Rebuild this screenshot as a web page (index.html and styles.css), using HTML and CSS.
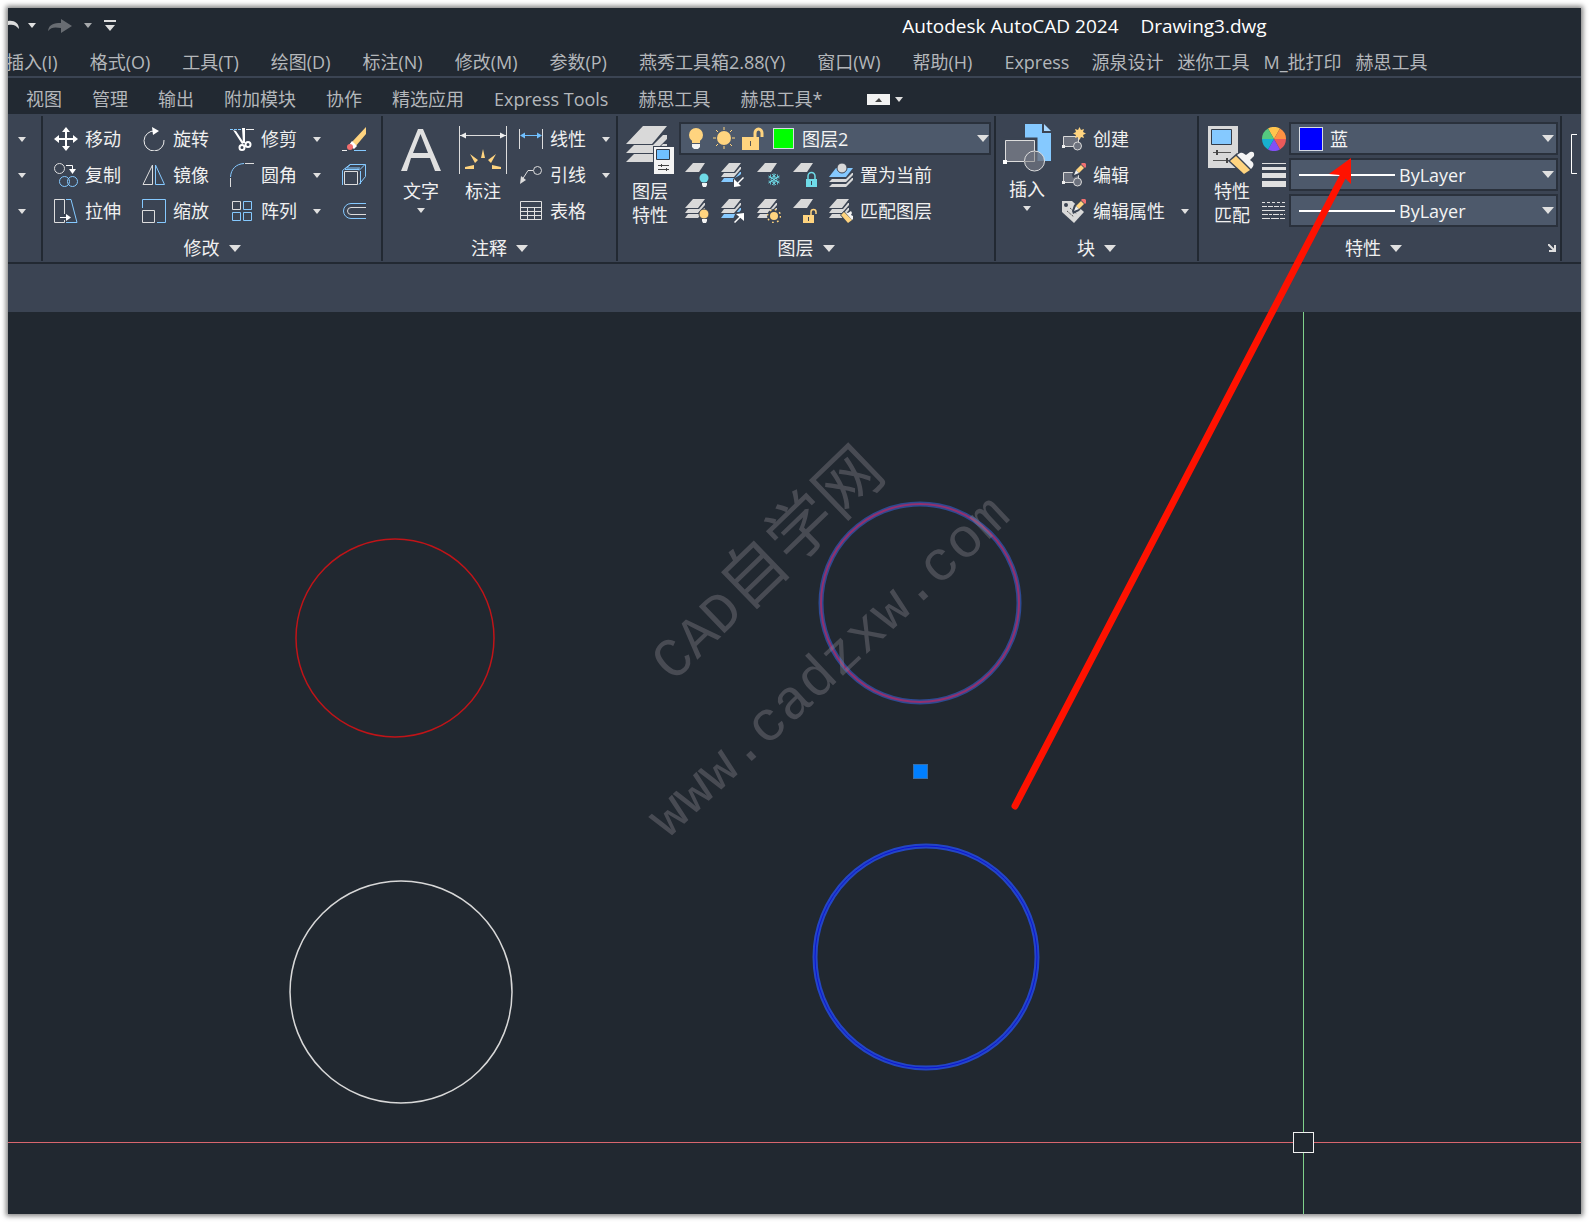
FILE: index.html
```
<!DOCTYPE html>
<html lang="zh-CN">
<head>
  <meta charset="utf-8">
  <title>Autodesk AutoCAD 2024 - Drawing3.dwg</title>
  <link rel="stylesheet" href="styles.css">
</head>
<body>
  <!-- shared icon shapes -->
  <svg class="defs" width="0" height="0">
    <symbol id="down" viewBox="0 0 8 5"><path d="M0 0h8L4 5z" fill="#e0e0e0"/></symbol>
    <symbol id="sheet" viewBox="0 0 24 24"><path d="M0 9L8 0h12l-6 9z" fill="#d9d9d9"/></symbol>
    <symbol id="stack" viewBox="0 0 24 24">
      <path d="M0 9L8 0h12l-7 9zM0 14l3-4h11l5-6h1v2l-7 8zM0 19l3-4h11l5-6h1v2l-7 8z" fill="#d9d9d9"/>
    </symbol>
    <symbol id="stack-blue" viewBox="0 0 24 24">
      <path d="M0 9L8 0h12l-7 9zM0 14l3-4h11l5-6h1v2l-7 8z" fill="#d9d9d9"/>
      <path d="M0 19l3-4h11l5-6h1v2l-7 8z" fill="#85c9ff"/>
    </symbol>
    <symbol id="block" viewBox="0 0 24 24">
      <path d="M1.500 9.500h15v10h-15z" fill="#6c717d" stroke="#d9d9d9"/>
      <circle cx="15.500" cy="19" r="4" fill="#6c717d" stroke="#d9d9d9"/>
      <path d="M0 18h3v3H0z" fill="#eee"/>
    </symbol>
    <symbol id="pencil" viewBox="0 0 24 24">
      <path d="M10 12l2-6 7-6 5 4-7 8-6 3z" fill="#3b4453"/>
      <path d="M14 7l5-5 3 3-5 5z" fill="#ffd47f"/>
      <path d="M20 0h3l1 1v3l-1 1-4-4z" fill="#f07070"/>
      <path d="M14 7l3 3-5 2z" fill="#eee"/>
    </symbol>
  </svg>

  <div class="window">
    <header class="titlebar">
      <div class="quick">
        <button class="tool undo" aria-label="撤销"><svg width="11" height="14"><path d="M0 2c6-1 11 2 11 8-3-4-6-5-11-4z" fill="#ddd"/></svg></button>
        <button class="tool" aria-label="撤销列表"><svg width="8" height="5"><use href="#down"/></svg></button>
        <button class="tool redo" aria-label="重做"><svg width="24" height="14"><path d="M0 12C1 5 6 4 13 4V0l11 7-11 7v-5C7 8 3 8 0 12z" fill="#686c72"/></svg></button>
        <button class="tool dim" aria-label="重做列表"><svg width="8" height="5"><use href="#down"/></svg></button>
        <button class="tool" aria-label="自定义"><svg width="12" height="12"><path d="M0 0h12v2H0zM1 5h10l-5 6z" fill="#ddd"/></svg></button>
      </div>
      <div class="title"><span>Autodesk AutoCAD 2024</span><span>Drawing3.dwg</span></div>
    </header>

    <nav class="menu">
      <div class="menu-main">
        <a href="#">插入(I)</a><a href="#">格式(O)</a><a href="#">工具(T)</a><a href="#">绘图(D)</a><a href="#">标注(N)</a><a href="#">修改(M)</a><a href="#">参数(P)</a><a href="#">燕秀工具箱2.88(Y)</a><a href="#">窗口(W)</a><a href="#">帮助(H)</a><a href="#">Express</a>
      </div>
      <div class="menu-extra">
        <a href="#">源泉设计</a><a href="#">迷你工具</a><a href="#">M_批打印</a><a href="#">赫思工具</a>
      </div>
    </nav>

    <nav class="tabs">
      <a href="#">视图</a><a href="#">管理</a><a href="#">输出</a><a href="#">附加模块</a><a href="#">协作</a><a href="#">精选应用</a><a href="#">Express Tools</a><a href="#">赫思工具</a><a href="#">赫思工具*</a>
      <button class="tool collapse" aria-label="最小化功能区">
        <svg width="23" height="11"><path d="M0 0h23v11H0z" fill="#f2f2f2"/><path d="M8 8h7l-3-4z" fill="#444"/></svg>
        <svg width="8" height="5"><use href="#down"/></svg>
      </button>
    </nav>

    <main class="ribbon">
      <section class="panel panel-cut">
        <button class="tool row" aria-label="圆弧"><svg width="8" height="5"><use href="#down"/></svg></button>
        <button class="tool row" aria-label="矩形"><svg width="8" height="5"><use href="#down"/></svg></button>
        <button class="tool row" aria-label="填充"><svg width="8" height="5"><use href="#down"/></svg></button>
      </section>

      <section class="panel modify">
        <div class="modify-grid">
          <button class="tool">
            <svg class="ic" viewBox="0 0 24 24"><path d="M12 0l4 5h-3v6h6V8l5 4-5 4v-3h-6v6h3l-4 5-4-5h3v-6H5v3l-5-4 5-4v3h6V5H8z" fill="#fff"/></svg>移动</button>
          <button class="tool">
            <svg class="ic" viewBox="0 0 24 24" fill="none"><path d="M13 4A10 10 0 1 0 22 13" stroke="#eee"/><path d="M10 0l7 4-6 4z" fill="#fff"/></svg>旋转</button>
          <button class="tool">
            <svg class="ic" viewBox="0 0 24 24" fill="none"><path d="M0 2.500h12" stroke="#85c9ff" stroke-dasharray="3 1"/><path d="M16 2.500h8" stroke="#eee"/><path d="M3 3l3 1 8 12-2 1zM12 1h3v15h-2z" fill="#fff"/><circle cx="12" cy="20.500" r="2.500" stroke="#fff" stroke-width="2"/><circle cx="18" cy="17.500" r="2.500" stroke="#fff" stroke-width="2"/></svg>修剪
            <svg class="drop" width="8" height="5"><use href="#down"/></svg></button>
          <button class="tool" aria-label="删除">
            <svg class="ic" viewBox="0 0 24 24"><path d="M12 23.500h12" stroke="#85c9ff"/><path d="M0 23.500h5" stroke="#eee"/><path d="M9 16L24 0v7l-11 13z" fill="#ffd47f"/><path d="M7 18l3-4 5 5-3 3z" fill="#fff"/><circle cx="8" cy="20" r="3" fill="#f26d6d"/></svg></button>

          <button class="tool">
            <svg class="ic" viewBox="0 0 24 24" fill="none"><circle cx="5.500" cy="5.500" r="5" stroke="#ddd"/><circle cx="10.500" cy="18.500" r="5" stroke="#85c9ff"/><circle cx="18.500" cy="18.500" r="5" stroke="#85c9ff"/><path d="M12 2.500h6.500V7" stroke="#fff"/><path d="M15 6h7l-3.500 5z" fill="#fff"/></svg>复制</button>
          <button class="tool">
            <svg class="ic" viewBox="0 0 24 24" fill="none"><path d="M10.500 2v19.500H1z" stroke="#ddd"/><path d="M13.500 2v19.500h9z" stroke="#85c9ff"/></svg>镜像</button>
          <button class="tool">
            <svg class="ic" viewBox="0 0 24 24" fill="none"><path d="M.5 14C1 6 6 1 14 .5" stroke="#85c9ff"/><path d="M15 .5h9M.5 15v9" stroke="#ddd"/></svg>圆角
            <svg class="drop" width="8" height="5"><use href="#down"/></svg></button>
          <button class="tool" aria-label="分解">
            <svg class="ic" viewBox="0 0 24 24" fill="none"><path d="M.5 22V7.500L8 1.500h15.500v12L17 21.500M17 7.500l6-6M3 6.500h14l-1-1M18.500 8v13M8 2L3 6M5 5h13" stroke="#85c9ff"/><path d="M2.500 8.500h13v13h-13z" stroke="#ddd"/></svg></button>

          <button class="tool">
            <svg class="ic" viewBox="0 0 24 24" fill="none"><path d="M10.500 15V.5H.5v23h10V21" stroke="#ddd"/><path d="M12 .5h5l6 23H12" stroke="#85c9ff"/><path d="M6 18.500h7" stroke="#fff"/><path d="M12 15l5 3.500-5 3.500z" fill="#fff"/></svg>拉伸</button>
          <button class="tool">
            <svg class="ic" viewBox="0 0 24 24" fill="none"><path d="M.5 9V.5h23v23H15" stroke="#85c9ff"/><path d="M.5 11.500h12v12H.5z" stroke="#ddd"/></svg>缩放</button>
          <button class="tool">
            <svg class="ic" viewBox="0 0 24 24" fill="none"><path d="M2.500 2.500h8v8h-8z" stroke="#ddd"/><path d="M13.500 2.500h8v8h-8zM2.500 13.500h8v8h-8zM13.500 13.500h8v8h-8z" stroke="#85c9ff"/></svg>阵列
            <svg class="drop" width="8" height="5"><use href="#down"/></svg></button>
          <button class="tool" aria-label="偏移">
            <svg class="ic" viewBox="0 0 24 24" fill="none"><path d="M24 4.500H9a7.500 7.500 0 0 0 0 15h15" stroke="#85c9ff"/><path d="M24 8.500H9a3.500 3.500 0 0 0 0 7h15" stroke="#ddd"/></svg></button>
        </div>
        <button class="tool panel-title">修改<svg width="12" height="7" viewBox="0 0 8 5" preserveAspectRatio="none"><use href="#down"/></svg></button>
      </section>

      <section class="panel annotate">
        <div class="panel-body">
          <button class="tool big">
            <svg width="40" height="48"><path d="M0 45L17 3h5l18 42h-6l-5-13H10L6 45zM12 27h15L19.500 8z" fill="#e0e0e0"/></svg>
            <span>文字</span>
            <svg width="8" height="5"><use href="#down"/></svg>
          </button>
          <button class="tool big">
            <svg width="48" height="48"><path d="M.5 0v48M47.500 0v48M1 9.500h46" stroke="#ddd"/><path d="M1 9.500l6-3v6zM47 9.500l-6-3v6z" fill="#eee"/><path d="M24 23l2 9h-4zM11 28l8 6-3 3zM37 28l-8 6 3 3zM6 41l9-2v4H6zM42 41l-9-2v4h9z" fill="#ffd47f"/></svg>
            <span>标注</span>
          </button>
          <div class="column">
            <button class="tool row">
              <svg class="ic" viewBox="0 0 24 24"><path d="M.5 2v20M23.500 2v20" stroke="#ddd"/><path d="M2 8.500h20" stroke="#70c0ff"/><path d="M1 8.500l5-3v6zM23 8.500l-5-3v6z" fill="#70c0ff"/></svg>线性
              <svg class="drop" width="8" height="5"><use href="#down"/></svg></button>
            <button class="tool row">
              <svg class="ic" viewBox="0 0 24 24"><path d="M3 17L9 7.500h5" fill="none" stroke="#ddd"/><circle cx="18.500" cy="7.500" r="4" fill="none" stroke="#ddd"/><path d="M1 21l1-8 5 4z" fill="#ddd"/></svg>引线
              <svg class="drop" width="8" height="5"><use href="#down"/></svg></button>
            <button class="tool row">
              <svg class="ic" viewBox="0 0 24 24"><path d="M1.500 2.500h21v18h-21zM1.500 8.500h21M1.500 12.500h21M1.500 16.500h21M8.500 8v12M15.500 8v12" fill="none" stroke="#e0e0e0"/></svg>表格</button>
          </div>
        </div>
        <button class="tool panel-title">注释<svg width="12" height="7" viewBox="0 0 8 5" preserveAspectRatio="none"><use href="#down"/></svg></button>
      </section>

      <section class="panel layers">
        <div class="panel-body">
          <button class="tool big">
            <svg width="48" height="48"><path d="M0 18L17 0h24L26 18zM0 27l8-8h19L37 9h4v4L27 27zM0 36l8-8h19l10-10h4v4L27 36z" fill="#d9d9d9"/><path d="M27 20h21v28H27z" fill="#3b4453"/><path d="M28 21h20v27H28z" fill="#f4f4f4"/><path d="M30.500 23.500h13v10h-13z" fill="#70c0ff" stroke="#333b47"/><path d="M32 39.500h11M32 43.500h11M35.500 38v3M40.500 42v3" stroke="#444"/></svg>
            <span>图层<br>特性</span>
          </button>
          <div class="layer-tools">
            <div class="combo">
              <svg width="80" height="24">
                <circle cx="8" cy="8" r="7" fill="#ffd47f"/><path d="M4 12h8v4H4z" fill="#ffd47f"/><path d="M4 17h8v3l-2 2H6l-2-2z" fill="#f4f4f4"/>
                <circle cx="36" cy="11" r="7" fill="#ffd47f"/><path d="M36 0v3M36 19v3M25 11h3M44 11h3M28 3l2 2M42 17l2 2M28 19l2-2M42 5l2-2" stroke="#ffd47f"/>
                <path d="M54 10h17v13H54z" fill="#ffd47f"/><path d="M67 10V5a3.500 4 0 0 1 7 0v4" transform="translate(0 1)" fill="none" stroke="#ffd47f" stroke-width="3"/><path d="M62.500 14v5" stroke="#555"/>
              </svg>
              <span class="swatch green"></span>
              <select aria-label="图层"><option>图层2</option></select>
              <svg class="mark" width="12" height="7" viewBox="0 0 8 5" preserveAspectRatio="none"><use href="#down"/></svg>
            </div>
            <div class="layer-grid">
              <button class="tool" aria-label="关"><svg class="ic" viewBox="0 0 24 24"><use href="#sheet"/><circle cx="19" cy="15" r="4.500" fill="#6fdbe8"/><path d="M17 20h5v2l-1 2h-3l-1-2z" fill="#f4f4f4"/></svg></button>
              <button class="tool" aria-label="隔离"><svg class="ic" viewBox="0 0 24 24"><use href="#stack-blue"/><path d="M12 16l9-5 3 3-8 10h-4z" fill="#3b4453"/><path d="M22.500 14.500l-6 6" stroke="#fff" stroke-width="1.500"/><path d="M13 24v-8l7 7z" fill="#fff"/></svg></button>
              <button class="tool" aria-label="冻结"><svg class="ic" viewBox="0 0 24 24"><use href="#sheet"/><path d="M17 10.500v12M11.500 13l11 7M11.500 20l11-7" stroke="#6fdbe8"/><circle cx="17" cy="16.500" r="3" fill="none" stroke="#6fdbe8"/><path d="M15 11l2 2 2-2M15 22l2-2 2 2M11.500 15l2-.5v-3M22.500 15l-2-.5v-3M11.500 18l2 .5v3M22.500 18l-2 .5v3" fill="none" stroke="#6fdbe8" stroke-width=".8"/></svg></button>
              <button class="tool" aria-label="锁定"><svg class="ic" viewBox="0 0 24 24"><use href="#sheet"/><path d="M15 16v-3a3.500 3.500 0 0 1 7 0v3" fill="none" stroke="#6fdbe8" stroke-width="1.500"/><path d="M13 16h11v8H13z" fill="#6fdbe8"/><path d="M18.500 18v4" stroke="#3b4453"/></svg></button>
              <button class="tool"><svg class="ic" viewBox="0 0 24 24"><path d="M0 14l7-9h17l-7 9z" fill="#85c9ff"/><path d="M0 19l3-3h14l6-6h1v2l-7 7zM0 24l3-3h14l6-6h1v2l-7 7z" fill="#d9d9d9"/><circle cx="13" cy="5" r="5" fill="#d9d9d9" stroke="#3b4453"/></svg>置为当前</button>
              <button class="tool" aria-label="打开所有图层"><svg class="ic" viewBox="0 0 24 24"><use href="#stack"/><circle cx="19" cy="15" r="5" fill="#ffd47f" stroke="#3b4453"/><path d="M17 20h5v2l-1 2h-3l-1-2z" fill="#f4f4f4"/></svg></button>
              <button class="tool" aria-label="取消隔离"><svg class="ic" viewBox="0 0 24 24"><use href="#stack-blue"/><path d="M12 20l3-7h9v11H12z" fill="#3b4453"/><path d="M13.500 23.500l6-6" stroke="#fff" stroke-width="1.500"/><path d="M23 14v8l-8-7z" fill="#fff"/></svg></button>
              <button class="tool" aria-label="解冻所有图层"><svg class="ic" viewBox="0 0 24 24"><use href="#stack"/><circle cx="17" cy="17" r="7" fill="#3b4453"/><circle cx="17" cy="17" r="4" fill="#ffd47f"/><circle cx="17" cy="17" r="6.500" fill="none" stroke="#ffd47f" stroke-width="1.500" stroke-dasharray="1.700 3.400"/></svg></button>
              <button class="tool" aria-label="解锁"><svg class="ic" viewBox="0 0 24 24"><use href="#sheet"/><path d="M18 16v-3a2.500 2.500 0 0 1 5 0v2" fill="none" stroke="#ffd47f" stroke-width="1.500"/><path d="M10 16h11v8H10z" fill="#ffd47f"/><path d="M15.500 18v4" stroke="#3b4453"/></svg></button>
              <button class="tool"><svg class="ic" viewBox="0 0 24 24"><use href="#stack"/><path d="M11 16l4-4 9 8-5 5z" fill="#3b4453"/><path d="M12 16l3-3 8 8-4 3z" fill="#ffd47f"/><path d="M16 13l3 1 3-2 1 2-1 2 2 1v3l-1 1z" fill="#f4f4f4"/></svg>匹配图层</button>
            </div>
          </div>
        </div>
        <button class="tool panel-title">图层<svg width="12" height="7" viewBox="0 0 8 5" preserveAspectRatio="none"><use href="#down"/></svg></button>
      </section>

      <section class="panel blocks">
        <div class="panel-body">
          <button class="tool big">
            <svg width="48" height="48"><path d="M22 0h17v9h9v28H22z" fill="#85c9ff"/><path d="M41 0l7 7h-7z" fill="#a9d8ff"/><path d="M1.500 15.500h31v23h-31z" fill="#6c717d" stroke="#3b4453" stroke-width="4"/><path d="M2.500 16.500h29v21h-29z" fill="#6c717d" stroke="#ddd"/><circle cx="31.500" cy="37" r="10" fill="#6c717d" fill-opacity=".8" stroke="#ddd"/><path d="M31.500 27v10.500H21" fill="none" stroke="#aaa"/><path d="M0 36h4v4H0z" fill="#fff"/></svg>
            <span>插入</span>
            <svg width="8" height="5"><use href="#down"/></svg>
          </button>
          <div class="column">
            <button class="tool row"><svg class="ic" viewBox="0 0 24 24"><use href="#block"/><path d="M17.500 0l1.500 3 3-1-1 3 3 1.500-3 1.500 1 3-3-1-1.500 3-1.500-3-3 1 1-3-3-1.500 3-1.500-1-3 3 1z" fill="#ffd47f"/></svg>创建</button>
            <button class="tool row"><svg class="ic" viewBox="0 0 24 24"><use href="#block"/><use href="#pencil"/></svg>编辑</button>
            <button class="tool row"><svg class="ic" viewBox="0 0 24 24"><path d="M0 2h10l12 11-10 11L0 13z" fill="#d9d9d9"/><circle cx="4" cy="6" r="2" fill="#3b4453"/><path d="M5 12l7 6M8 9l7 6" stroke="#555" stroke-dasharray="2 1"/><use href="#pencil"/></svg>编辑属性
              <svg class="drop" width="8" height="5"><use href="#down"/></svg></button>
          </div>
        </div>
        <button class="tool panel-title">块<svg width="12" height="7" viewBox="0 0 8 5" preserveAspectRatio="none"><use href="#down"/></svg></button>
      </section>

      <section class="panel props">
        <div class="panel-body">
          <button class="tool big">
            <svg width="48" height="48"><path d="M0 0h30v42H0z" fill="#d9d9d9"/><path d="M3.500 3.500h20v15h-20z" fill="#85c9ff" stroke="#333b47"/><path d="M5 26.500h18M5 34.500h16" stroke="#555"/><path d="M8 24h2v5H8zM18 32h2v5h-2z" fill="#444"/><path d="M20 35l9-8 7 2 8-3 4 4v9l-9 10h-4z" fill="#3b4453"/><path d="M22 35l6-5 14 14-6 4z" fill="#ffd47f"/><path d="M29 29c5-4 6-2 9 0l4-3q5-1 4 4l-4 4c5 3 4 6 1 9z" fill="#f4f4f4"/></svg>
            <span>特性<br>匹配</span>
          </button>
          <div class="prop-grid">
            <svg class="ic" viewBox="0 0 24 24"><path d="M12 12L6 1.600A12 12 0 0 1 18 1.600z" fill="#ffc44d"/><path d="M12 12l6-10.400A12 12 0 0 1 24 12z" fill="#ff9142"/><path d="M12 12h12a12 12 0 0 1-6 10.400z" fill="#eb5a5a"/><path d="M12 12l6 10.400a12 12 0 0 1-12 0z" fill="#8250f5"/><path d="M12 12L6 22.400A12 12 0 0 1 0 12z" fill="#18b0d0"/><path d="M12 12H0A12 12 0 0 1 6 1.600z" fill="#55c97f"/></svg>
            <div class="combo">
              <span class="swatch blue"></span>
              <select aria-label="颜色"><option>蓝</option></select>
              <svg class="mark" width="12" height="7" viewBox="0 0 8 5" preserveAspectRatio="none"><use href="#down"/></svg>
            </div>
            <svg class="ic" viewBox="0 0 24 24"><path d="M0 0h24v1H0zM0 4h24v3H0zM0 10h24v5H0zM0 18h24v6H0z" fill="#e0e0e0"/></svg>
            <div class="combo">
              <span class="line"></span>
              <select aria-label="线宽"><option>ByLayer</option></select>
              <svg class="mark" width="12" height="7" viewBox="0 0 8 5" preserveAspectRatio="none"><use href="#down"/></svg>
            </div>
            <svg class="ic" viewBox="0 0 24 24" stroke="#e0e0e0"><path d="M0 3.500h23" stroke-dasharray="3 2"/><path d="M0 7.500h23" stroke-dasharray="5 1"/><path d="M0 11.500h23"/><path d="M0 15.500h23" stroke-dasharray="6 1 3 1"/><path d="M0 19.500h23" stroke-dasharray="8 1"/></svg>
            <div class="combo">
              <span class="line"></span>
              <select aria-label="线型"><option>ByLayer</option></select>
              <svg class="mark" width="12" height="7" viewBox="0 0 8 5" preserveAspectRatio="none"><use href="#down"/></svg>
            </div>
          </div>
        </div>
        <div class="title-row">
          <button class="tool panel-title">特性<svg width="12" height="7" viewBox="0 0 8 5" preserveAspectRatio="none"><use href="#down"/></svg></button>
          <button class="tool" aria-label="特性选项板"><svg width="8" height="8"><path d="M0 0l6 6M1 7h6V1" fill="none" stroke="#e0e0e0" stroke-width="2"/></svg></button>
        </div>
      </section>

      <section class="panel panel-next">
        <svg width="6" height="40"><path d="M6 .5H.5v39H6" fill="none" stroke="#fff"/></svg>
      </section>
    </main>

    <div class="file-strip"></div>

    <div class="canvas">
      <svg class="drawing" width="100%" height="100%" fill="none">
        <circle cx="387" cy="326" r="99" stroke="#c01418" stroke-width="1.500"/>
        <circle cx="393" cy="680" r="111" stroke="#d8d8d8" stroke-width="1.500"/>
        <circle cx="912" cy="291" r="99" stroke="#2e4a92" stroke-width="5"/>
        <circle cx="912" cy="291" r="99" stroke="#93306e" stroke-width="2"/>
        <circle cx="918" cy="645" r="111" stroke="#2446c4" stroke-width="5"/>
        <circle cx="918" cy="645" r="111" stroke="#0a10d8" stroke-width="1"/>
        <rect x="905.500" y="452.500" width="14" height="14" fill="#007fff" stroke="#3a6ea5"/>
        <g class="watermark">
          <text transform="translate(665 371) rotate(-44)"><tspan class="wm-latin">CAD</tspan><tspan class="wm-cjk">自学网</tspan></text>
          <text class="wm-url" transform="translate(660 527) rotate(-43)">www.cadzxw.com</text>
        </g>
        <path d="M1295.500 0v820M1295.500 841v400" stroke="#7fd08a"/>
        <line x1="0" y1="830.500" x2="1285" y2="830.500" stroke="#d9666e"/>
        <line x1="1306" y1="830.500" x2="100%" y2="830.500" stroke="#d9666e"/>
        <rect x="1285.500" y="820.500" width="20" height="20" stroke="#f0f0f0"/>
      </svg>
    </div>

    <!-- pointer from the circles to the colour list -->
    <svg class="pointer" width="100%" height="100%">
      <path d="M1007 798L1335 168" stroke="#ff1200" stroke-width="7" stroke-linecap="round"/>
      <path d="M1343 150l-22 16 11 1 6 4 5 5z" fill="#ff1200"/>
    </svg>
  </div>
</body>
</html>
```
FILE: styles.css
```
* {
  box-sizing: border-box;
}

body {
  margin: 0;
  padding: 8px;
  background-color: #fff;
  font-family: "Open Sans", "Noto Sans CJK SC", sans-serif;
  font-size: 18px;
  line-height: 24px;
  color: #f0f0f0;
}

svg {
  display: block;
  flex-shrink: 0;
}

.defs {
  position: absolute;
}

a {
  color: #b4b7bb;
  text-decoration: none;
  white-space: nowrap;
}

.window {
  position: relative;
  display: flex;
  flex-direction: column;
  min-height: calc(100vh - 16px);
  background-color: #222932;
  box-shadow: 0 0 5px 2px rgba(0, 0, 0, 0.5);
}

.tool {
  display: flex;
  align-items: center;
  gap: 7px;
  margin: 0;
  padding: 0;
  border: none;
  background: none;
  color: inherit;
  font: inherit;
  white-space: nowrap;
  cursor: pointer;
}

.ic {
  width: 24px;
  height: 24px;
}

/* title bar */
.titlebar {
  display: flex;
  align-items: center;
  height: 35px;
}

.quick {
  display: flex;
  align-items: center;
  gap: 12px;
}

.undo {
  margin-right: -3px;
}

.dim {
  opacity: 0.7;
}

.title {
  display: flex;
  gap: 22px;
  margin: 0 auto;
  padding-left: 592px;
  padding-right: 120px;
  font-size: 19px;
  color: #fff;
  white-space: nowrap;
}

/* menu and tabs */
.menu {
  display: flex;
  gap: 22px;
  height: 35px;
  padding-top: 4px;
  align-items: center;
  border-bottom: 2px solid #3b4453;
  overflow: hidden;
}

.menu-main {
  display: flex;
  gap: 32px;
  margin-left: -2px;
}

.menu-extra {
  display: flex;
  gap: 14px;
}

.tabs {
  display: flex;
  align-items: center;
  gap: 30px;
  height: 36px;
  padding: 6px 18px 0;
}

.collapse {
  margin-left: 15px;
  gap: 5px;
}

/* ribbon */
.ribbon {
  display: flex;
  height: 150px;
  padding-top: 2px;
  background-color: #3b4453;
  border-bottom: 2px solid #222932;
  overflow: hidden;
}

.panel {
  display: flex;
  flex-direction: column;
  justify-content: space-between;
  padding-top: 5px;
  margin-bottom: 1px;
  border-right: 2px solid #222932;
}

.panel-body {
  display: flex;
}

.panel-cut {
  width: 35px;
  padding-left: 10px;
  justify-content: flex-start;
}

.row {
  height: 36px;
}

.column {
  display: flex;
  flex-direction: column;
}

.drop {
  margin-left: 9px;
}

.panel-title {
  align-self: center;
  gap: 9px;
  height: 26px;
}

.title-row {
  display: flex;
  align-items: center;
  padding-right: 4px;
}

.title-row .panel-title {
  margin: 0 auto;
}

.big {
  flex-direction: column;
  gap: 5px;
  padding-top: 5px;
}

.modify-grid {
  display: grid;
  grid-template-columns: 88px 88px 112px 24px;
  grid-auto-rows: 36px;
  padding: 0 15px 0 11px;
}

.annotate .panel-body {
  padding: 0 6px 0 18px;
}

.annotate .big {
  margin-right: 12px;
}

.annotate .big:first-child {
  margin-right: 18px;
}

.layers .panel-body {
  padding: 0 3px 0 8px;
}

.layers .panel-body,
.props .panel-body {
  gap: 5px;
}

.layer-tools {
  width: 312px;
  padding-top: 1px;
}

.layer-grid {
  display: grid;
  grid-template-columns: repeat(4, 36px) auto;
  grid-auto-rows: 36px;
  padding: 2px 6px 0;
}

.combo {
  display: flex;
  align-items: center;
  height: 33px;
  padding: 0 2px 0 8px;
  border: 2px solid #2a313c;
  background-color: #4d596b;
}

.layer-tools .combo {
  padding: 0 0 0 7px;
}

.combo select {
  flex: 1;
  min-width: 0;
  padding: 0;
  border: none;
  appearance: none;
  background: none;
  color: #f4f4f4;
  font: inherit;
}

.mark {
  pointer-events: none;
}

.swatch {
  width: 21px;
  height: 21px;
  margin: 0 8px 0 5px;
  border: 1px solid #d8dde3;
}

.green {
  background-color: #00ff00;
}

.blue {
  width: 24px;
  height: 24px;
  margin: 0 7px 0 0;
  background-color: #0000ff;
}

.line {
  width: 96px;
  height: 2px;
  margin-right: 4px;
  background-color: #fff;
}

.blocks .panel-body {
  gap: 11px;
  padding: 0 8px 0 7px;
}

.blocks .big {
  padding-top: 3px;
}

.blocks .column {
  flex: 1;
}

.props {
  flex: 1;
}

.props .panel-body {
  padding: 0 2px 0 9px;
  gap: 6px;
}

.prop-grid {
  display: grid;
  grid-template-columns: 24px 1fr;
  grid-auto-rows: 33px;
  gap: 3px;
  align-items: center;
  flex: 1;
  padding-top: 1px;
}

.panel-next {
  width: 19px;
  border-right: none;
  padding: 18px 0 0 9px;
}

.file-strip {
  height: 48px;
  background-color: #3b4453;
}

/* drawing area */
.canvas {
  position: relative;
  flex: 1;
  min-height: 600px;
  background-color: #212830;
  overflow: hidden;
}

.drawing,
.pointer {
  position: absolute;
  top: 0;
  left: 0;
}

.pointer {
  pointer-events: none;
}

.watermark {
  fill: #8e8a93;
  opacity: 0.36;
}

.wm-latin {
  font-family: "Liberation Mono", monospace;
  font-size: 56px;
}

.wm-cjk {
  font-family: "Noto Sans CJK SC", sans-serif;
  font-size: 66px;
}

.wm-url {
  font-family: "Liberation Mono", monospace;
  font-size: 56px;
}
```
